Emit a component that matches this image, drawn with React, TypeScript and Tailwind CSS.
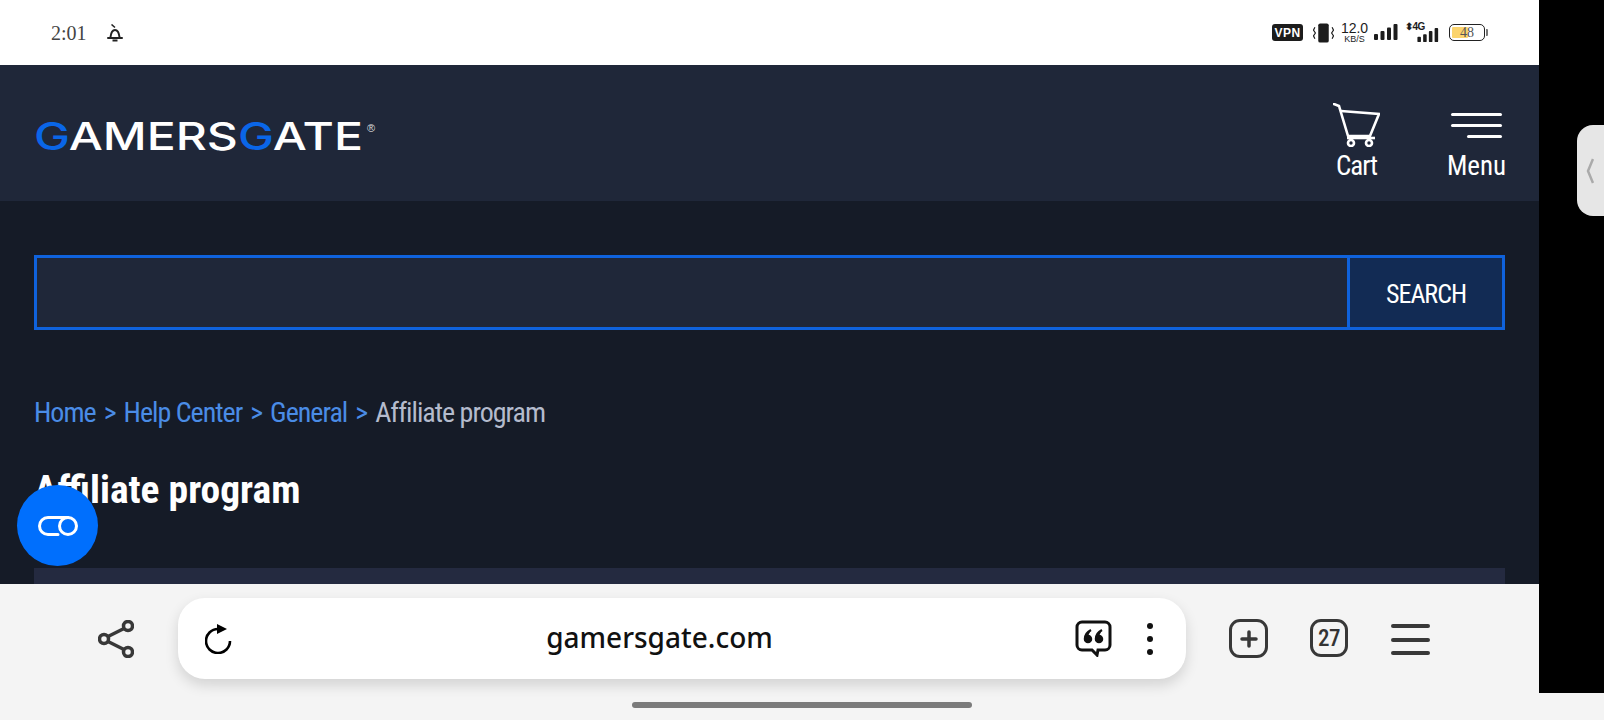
const NARROW = 'font-["Liberation_Sans_Narrow","Roboto_Condensed","Liberation_Sans",sans-serif]';

function Bars({ className }: { className?: string }) {
  return (
    <svg viewBox="0 0 24 17" className={className} fill="#1c1c1c">
      <rect x="0" y="10" width="4" height="6" rx="1" />
      <rect x="6.5" y="7" width="4" height="9" rx="1" />
      <rect x="13" y="3.5" width="4" height="12.5" rx="1" />
      <rect x="19.5" y="0" width="4" height="16" rx="1" />
    </svg>
  );
}

function StatusBar() {
  return (
    <div className="h-[65px] bg-white flex items-center justify-between pl-[51px] pr-[51px] shrink-0">
      <div className="flex items-center gap-[20px]">
        <span className='font-["Liberation_Serif",serif] text-[20px] text-[#444] leading-none'>2:01</span>
        <svg viewBox="0 0 16 18" className="w-[16px] h-[18px]" fill="none" stroke="#222" strokeWidth="2">
          <path d="M4.500 0.500l3.500 3" strokeWidth="1.600" />
          <path d="M3.500 13c.5-4 1.500-7 4.500-7s4 3 4.500 7" />
          <path d="M1 14h14" strokeLinecap="round" />
          <path d="M5.500 16.500h5" />
        </svg>
      </div>
      <div className="flex items-center">
        <span className='w-[31px] h-[17px] bg-[#1c1c1c] rounded-[3px] text-white text-[12px] font-bold font-["Liberation_Sans",sans-serif] flex items-center justify-center tracking-[0.5px]'>VPN</span>
        <svg viewBox="0 0 22 20" className="w-[21px] h-[20px] ml-[10px]" fill="#1c1c1c">
          <rect x="5.500" y="0" width="11" height="20" rx="2" />
          <path d="M2 4l-1.500 3 2 3-2 3 1.500 3M20 4l1.500 3-2 3 2 3-1.500 3" fill="none" stroke="#1c1c1c" strokeWidth="1.200" />
        </svg>
        <div className='ml-[7px] w-[27px] flex flex-col items-center font-["Liberation_Sans",sans-serif] text-[#1c1c1c]'>
          <span className="text-[14px] leading-[12px]">12.0</span>
          <span className="text-[9px] leading-[10px]">KB/S</span>
        </div>
        <Bars className="w-[24px] h-[17px] ml-[6px]" />
        <div className="relative w-[35px] h-[20px] ml-[7px]">
          <span className='absolute left-0 -top-[2px] text-[10px] font-bold font-["Liberation_Sans",sans-serif] text-[#1c1c1c] leading-[12px] tracking-tighter'>⬍4G</span>
          <Bars className="absolute right-0 bottom-0 w-[24px] h-[15px]" />
        </div>
        <div className="ml-[9px] flex items-center">
          <div className="relative w-[36px] h-[17px] border border-[#222] rounded-[5px] overflow-hidden bg-white">
            <div className="absolute left-[2px] top-[2px] bottom-[2px] w-[16px] bg-[#fbd46d] rounded-[1px]" />
            <span className='absolute inset-0 flex items-center justify-center font-["Liberation_Serif",serif] text-[14px] text-[#555] leading-none'>48</span>
          </div>
          <div className="w-[2px] h-[7px] ml-[1px] bg-[#777] rounded-r-[1px]" />
        </div>
      </div>
    </div>
  );
}

function Logo() {
  return (
    <svg viewBox="0 0 345 56" className="w-[345px] h-[56px]">
      <text
        x="0"
        y="45"
        textLength="329"
        lengthAdjust="spacingAndGlyphs"
        fontFamily="Inter, sans-serif"
        fontWeight="500"
        fontSize="38.500"
        fill="#fff"
      >
        <tspan fill="#0a66e8">G</tspan>AMERS<tspan fill="#0a66e8">G</tspan>ATE
      </text>
      <text x="333" y="27" fontFamily="Liberation Sans, sans-serif" fontSize="11" fill="#ddd">®</text>
    </svg>
  );
}

function Header() {
  return (
    <div className="h-[136px] bg-[#1f2739] flex items-center justify-between pl-[34px] pr-[34px] shrink-0">
      <Logo />
      <div className={`flex items-start gap-[68px] text-white ${NARROW}`}>
        <div className="flex flex-col items-center w-[47px] pt-[17px]">
          <svg viewBox="0 0 47 44" className="w-[47px] h-[44px]" fill="none" stroke="#fff" strokeWidth="2.600">
            <path d="M1 1l5 2 9 30" strokeLinecap="round" />
            <path d="M8 8l38 3-9 22H15" />
            <path d="M14 35h28" />
            <circle cx="18" cy="40" r="3" />
            <circle cx="36" cy="40" r="3" />
          </svg>
          <span className="text-[27px] leading-[30px] mt-[4px] tracking-[-1px]">Cart</span>
        </div>
        <div className="flex flex-col items-center w-[57px] pt-[27px]">
          <div className="flex flex-col items-end gap-[8px] w-[51px]">
            <div className="h-[3px] w-full bg-white rounded-full" />
            <div className="h-[3px] w-full bg-white rounded-full" />
            <div className="h-[3px] w-[35px] bg-white rounded-full" />
          </div>
          <span className="text-[27px] leading-[30px] mt-[13px]">Menu</span>
        </div>
      </div>
    </div>
  );
}

function Content() {
  return (
    <div className={`relative flex-1 min-h-0 overflow-hidden bg-[#151b27] px-[34px] pt-[54px] ${NARROW}`}>
      <div className="flex h-[75px] border-[3px] border-[#0f62dc] bg-[#1f2739]">
        <div className="flex-1" />
        <div className="w-[155px] pt-[3px] bg-[#122b54] border-l-[3px] border-[#0f62dc] flex items-center justify-center text-white text-[26px] leading-none tracking-[-1px]">
          SEARCH
        </div>
      </div>
      <div className="mt-[65px] text-[28px] leading-[36px] whitespace-nowrap text-[#4a8ce6] flex gap-[8px] tracking-[-1px]">
        <span>Home</span>
        <span>&gt;</span>
        <span>Help Center</span>
        <span>&gt;</span>
        <span>General</span>
        <span>&gt;</span>
        <span className="text-[#b4bbcd]">Affiliate program</span>
      </div>
      <h1 className="mt-[35px] text-[39.500px] leading-[48px] font-bold text-white">Affiliate program</h1>
      <div className="mt-[54px] h-[40px] bg-[#242a40]" />
      <div className="absolute left-[17px] top-[284px] w-[81px] h-[81px] rounded-full bg-[#006ffd] flex items-center justify-center">
        <svg viewBox="0 0 42 22" className="w-[42px] h-[22px]" fill="none" stroke="#fff" strokeWidth="3">
          <path d="M31 2.500H11a8.500 8.500 0 0 0 0 17h10" strokeLinecap="round" />
          <circle cx="31" cy="11" r="8.500" />
        </svg>
      </div>
    </div>
  );
}

function Toolbar() {
  return (
    <div className="h-[109px] bg-[#f4f4f4] flex items-start pt-[14px] pl-[98px] shrink-0">
      <svg viewBox="0 0 36 38" className="w-[36px] h-[38px] mt-[22px]" fill="none" stroke="#383838" strokeWidth="3.500">
        <circle cx="6" cy="19" r="4.500" />
        <circle cx="30" cy="6" r="4.500" />
        <circle cx="30" cy="32" r="4.500" />
        <path d="M10 16.500L26 8.500M10 21.500l16 8" />
      </svg>
      <div className="ml-[44px] w-[1008px] h-[81px] bg-white rounded-[27px] shadow-[0_6px_14px_rgba(0,0,0,0.14)] flex items-center pl-[27px] pr-[33px]">
        <svg viewBox="0 0 27 30" className="w-[27px] h-[30px]" fill="none" stroke="#000" strokeWidth="2.600">
          <path d="M25 17A12 12 0 1 1 13 5" />
          <path d="M12 0l10 5-10 5z" fill="#000" stroke="none" />
        </svg>
        <span className='flex-1 text-center font-["Noto_Sans",sans-serif] font-medium text-[28px] text-[#111] leading-none pl-[12px] pb-[3px]'>gamersgate.com</span>
        <svg viewBox="0 0 37 37" className="w-[37px] h-[37px]" fill="none" stroke="#111" strokeWidth="3">
          <path d="M7 2h23a5 5 0 0 1 5 5v18a5 5 0 0 1-5 5h-7l-1 5-5-5H7a5 5 0 0 1-5-5V7a5 5 0 0 1 5-5z" />
          <path d="M16 10c-4 2-6 5-6 9a3 3 0 1 0 3-3M27 10c-4 2-6 5-6 9a3 3 0 1 0 3-3" strokeWidth="2.500" fill="#111" />
        </svg>
        <div className="ml-[35px] flex flex-col gap-[7px]">
          <div className="w-[6px] h-[6px] rounded-full bg-[#111]" />
          <div className="w-[6px] h-[6px] rounded-full bg-[#111]" />
          <div className="w-[6px] h-[6px] rounded-full bg-[#111]" />
        </div>
      </div>
      <div className="ml-[43px] mt-[21px] w-[39px] h-[39px] border-[3.500px] border-[#383838] rounded-[11px] flex items-center justify-center">
        <svg viewBox="0 0 18 18" className="w-[18px] h-[18px]" stroke="#383838" strokeWidth="3.500" strokeLinecap="round">
          <path d="M9 2v14M2 9h14" />
        </svg>
      </div>
      <div className={`ml-[42px] mt-[21px] w-[38px] h-[38px] border-[3.500px] border-[#383838] rounded-[11px] flex items-center justify-center text-[23px] font-medium tracking-[-0.5px] text-[#333] leading-none ${NARROW}`}>
        27
      </div>
      <div className="ml-[43px] mt-[26px] w-[39px] flex flex-col gap-[9.500px]">
        <div className="h-[4px] bg-[#383838] rounded-full" />
        <div className="h-[4px] bg-[#383838] rounded-full" />
        <div className="h-[4px] bg-[#383838] rounded-full" />
      </div>
    </div>
  );
}

export default function App() {
  return (
    <div className="relative w-[1604px] h-[720px] overflow-hidden bg-[#f4f4f4]">
      <div className="flex h-[693px]">
        <div className="w-[1539px] flex flex-col shrink-0">
          <StatusBar />
          <Header />
          <Content />
          <Toolbar />
        </div>
        <div className="flex-1 bg-black" />
      </div>
      <div className="h-[27px] flex items-start justify-center pt-[9px]">
        <div className="w-[340px] h-[6px] rounded-full bg-[#7b7b7b]" />
      </div>
      <div className="absolute right-0 top-[125px] w-[27px] h-[91px] bg-[#e6e6e6] rounded-l-[16px] flex items-center pl-[9px]">
        <svg viewBox="0 0 8 26" className="w-[8px] h-[26px]" fill="none" stroke="#aaa" strokeWidth="2.500">
          <path d="M7 1L2 13l5 12" />
        </svg>
      </div>
    </div>
  );
}
